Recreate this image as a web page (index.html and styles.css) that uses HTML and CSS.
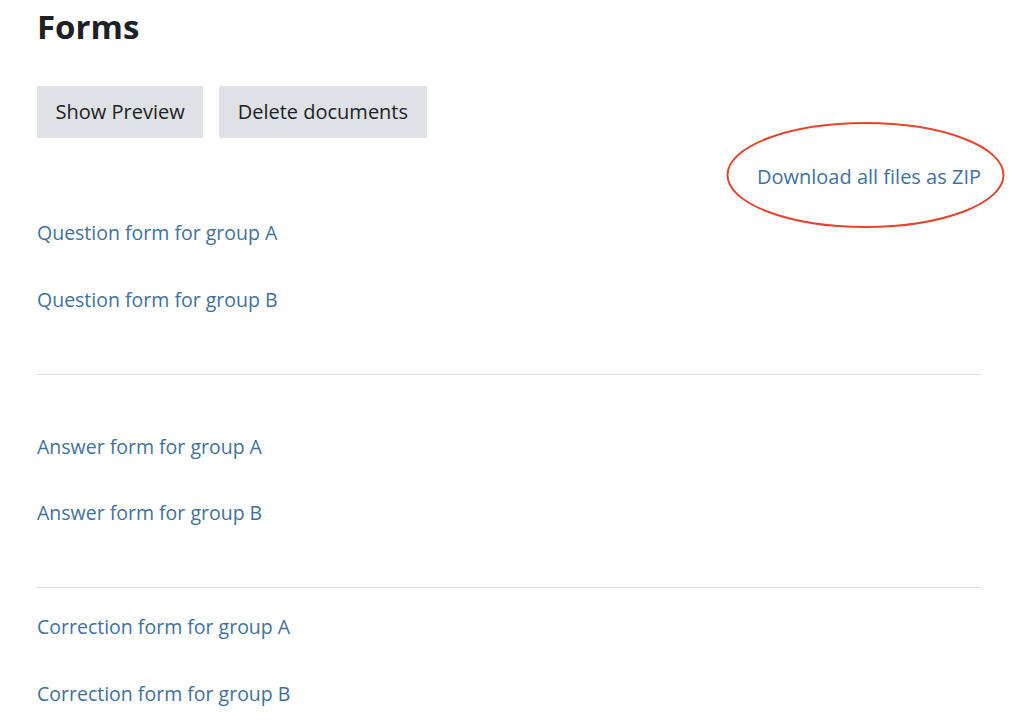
FILE: index.html
```html
<!DOCTYPE html>
<html lang="en">
<head>
<meta charset="utf-8">
<title>Forms</title>
<link rel="stylesheet" href="styles.css">
</head>
<body>
<main class="page">
  <h1 class="title">Forms</h1>
  <div class="actions">
    <button class="btn">Show Preview</button>
    <button class="btn">Delete documents</button>
  </div>
  <div class="download-row">
    <a class="link download" href="#">Download all files as ZIP<svg class="annot" width="280" height="108" viewBox="0 0 280 108"><ellipse cx="139.5" cy="53" rx="138" ry="52" fill="none" stroke="#e5432c" stroke-width="2"/></svg></a>
  </div>
  <section class="group group-first">
    <a class="link item" href="#">Question form for group A</a>
    <a class="link item" href="#">Question form for group B</a>
  </section>
  <hr class="sep">
  <section class="group group-second">
    <a class="link item" href="#">Answer form for group A</a>
    <a class="link item" href="#">Answer form for group B</a>
  </section>
  <hr class="sep">
  <section class="group group-third">
    <a class="link item" href="#">Correction form for group A</a>
    <a class="link item" href="#">Correction form for group B</a>
  </section>
</main>
</body>
</html>
```

FILE: styles.css
```css
* { box-sizing: border-box; }
html, body { margin: 0; padding: 0; background: #ffffff; }
body {
  font-family: "Open Sans", "Noto Sans", sans-serif;
  font-size: 20px;
  color: #1d2125;
}
.page {
  padding: 0 43px 0 37px;
}
.title {
  margin: 0;
  padding-top: 7px;
  font-size: 33px;
  line-height: 40px;
  font-weight: 700;
  color: #1d2125;
}
.actions {
  margin-top: 39px;
  display: flex;
  gap: 16px;
}
.btn {
  height: 52px;
  padding: 0 18.5px;
  border: none;
  border-radius: 2px;
  background: #dee2e6;
  color: #1d2125;
  font-family: inherit;
  font-size: 20px;
  line-height: 52px;
}
.download-row {
  margin-top: 24px;
  display: flex;
  justify-content: flex-end;
  line-height: 30px;
}
.link {
  color: #41719b;
  text-decoration: none;
  line-height: 30px;
}
.item { font-size: 19.5px; }
.download { position: relative; }
.annot {
  position: absolute;
  left: -31px;
  top: -40px;
  overflow: visible;
  pointer-events: none;
}
.group {
  display: flex;
  flex-direction: column;
  align-items: flex-start;
  gap: 37px;
}
.group-first { padding: 26px 0 59px; }
.group-second { padding: 57px 0 59px; gap: 36px; }
.group-third { padding: 24px 0 0; }
.sep {
  margin: 0;
  border: none;
  border-top: 1px solid #dcdcdc;
  height: 0;
}
```
